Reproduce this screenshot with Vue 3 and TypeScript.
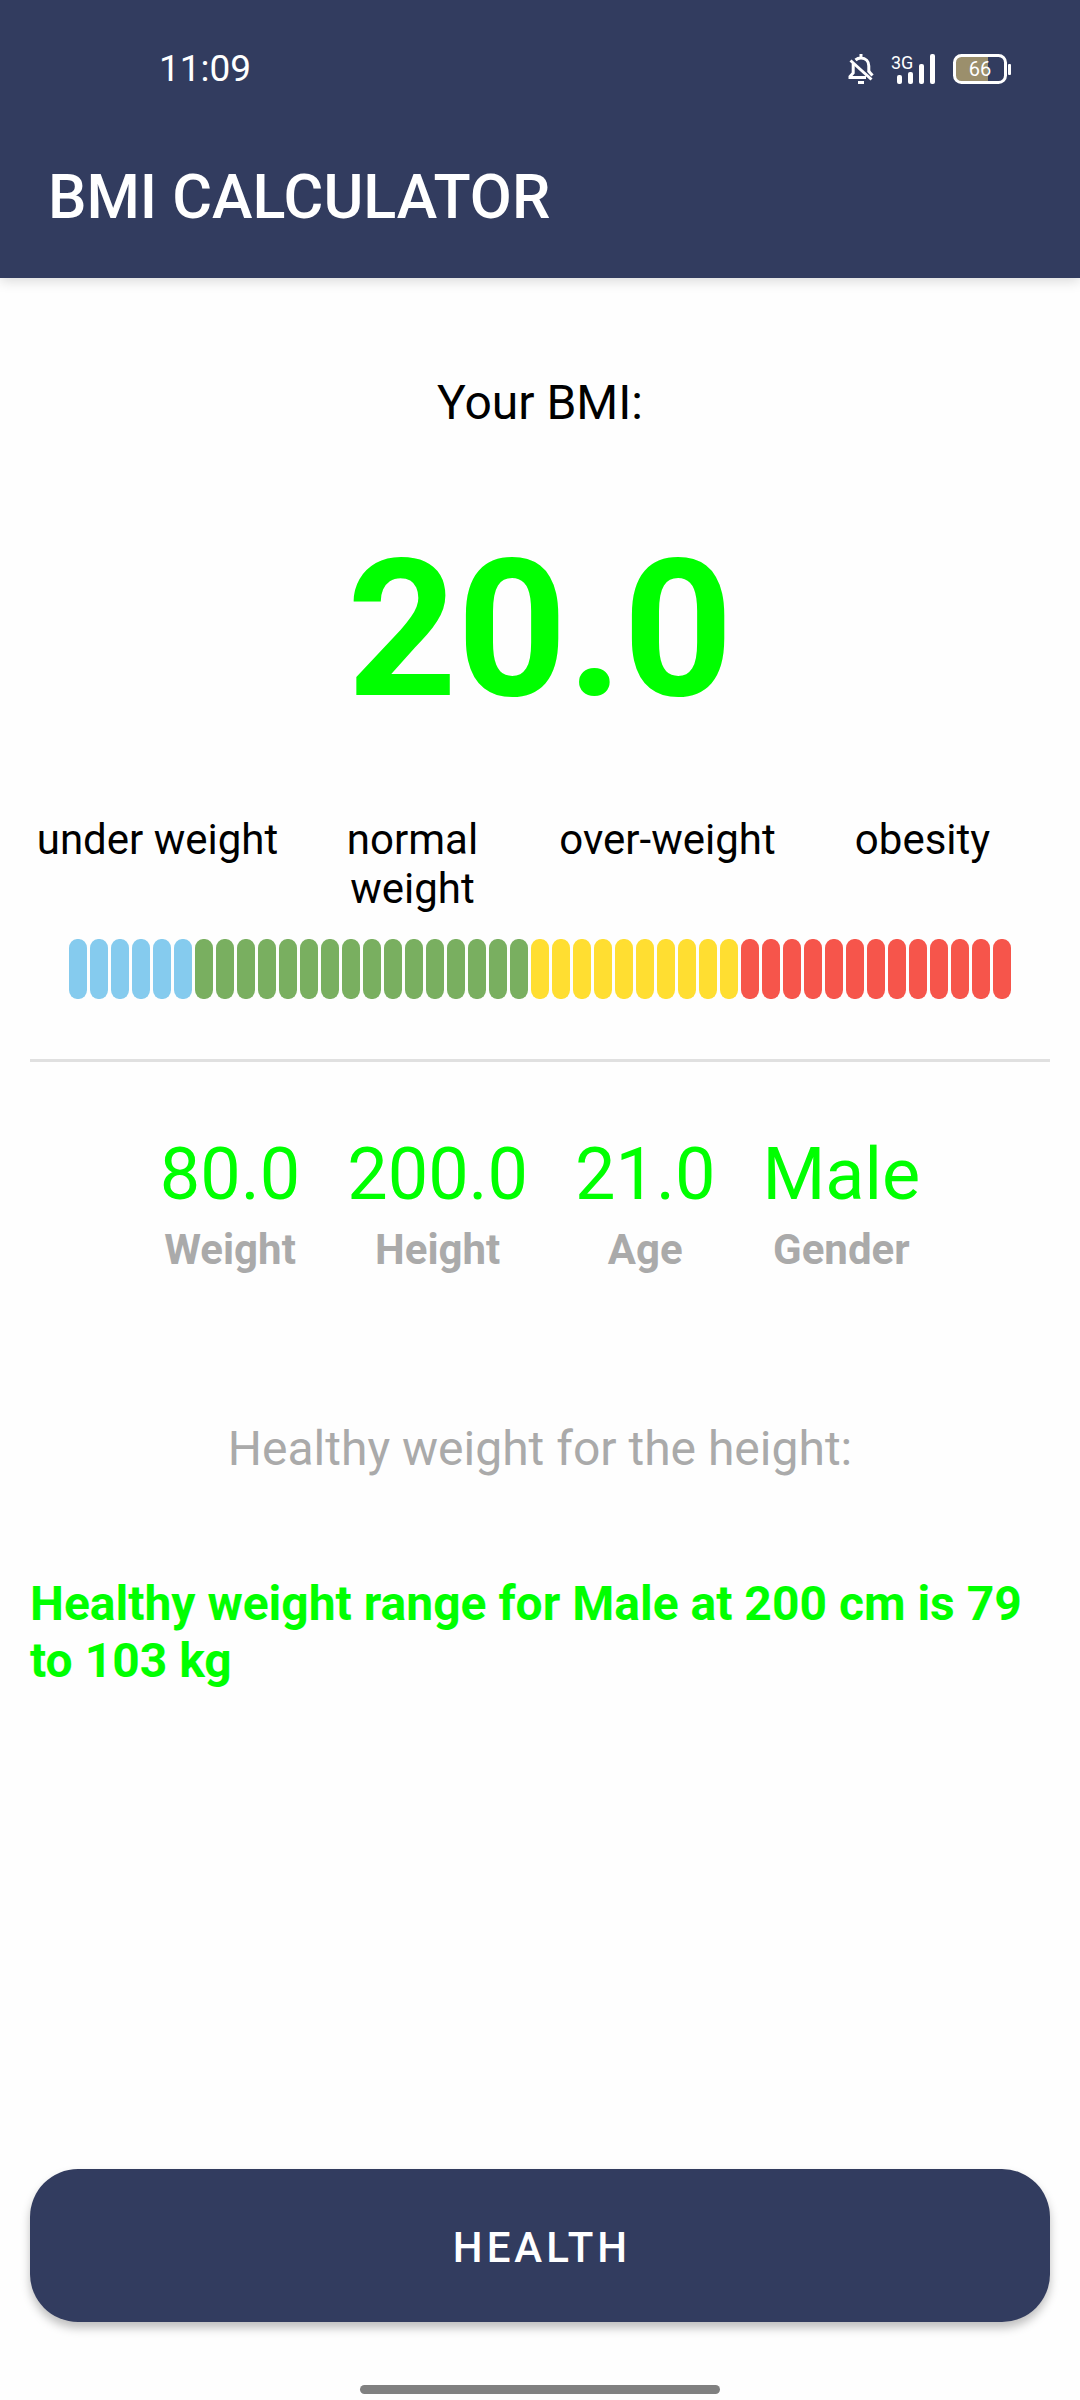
<script setup lang="ts">
interface Category {
  name: string
  color: string
  count: number
}

interface Stat {
  label: string
  value: string
}

const bmi = '20.0'

const categories: Category[] = [
  { name: 'under weight', color: '#85cbee', count: 6 },
  { name: 'normal weight', color: '#79af60', count: 16 },
  { name: 'over-weight', color: '#ffde31', count: 10 },
  { name: 'obesity', color: '#f6554b', count: 13 },
]

const segments: string[] = categories.flatMap((c) => Array<string>(c.count).fill(c.color))

const stats: Stat[] = [
  { label: 'Weight', value: '80.0' },
  { label: 'Height', value: '200.0' },
  { label: 'Age', value: '21.0' },
  { label: 'Gender', value: 'Male' },
]
</script>

<template>
  <div class="page">
    <header class="app-bar">
      <div class="status">
        <time class="clock">11:09</time>
        <div class="indicators">
          <svg class="bell" width="26" height="30" viewBox="0 0 26 30" fill="none" stroke="#fff" stroke-width="3" aria-label="Muted">
            <path d="M13 0v4M7.500 6C9 4.700 10.900 4 13 4c4.700 0 7.800 3.400 7.800 8v6" />
            <path d="M5.200 9.500v9.500L2 22.500V23.500h16" />
            <path d="M2.500 6.500L23.500 25.500" />
            <path d="M20.500 17l4 4.500" />
            <path d="M10 28.500h6" />
          </svg>
          <svg class="signal" width="44" height="38" viewBox="0 -8 44 38" fill="#fff" aria-label="3G signal">
            <text x="0" y="15" font-size="18">3G</text>
            <rect x="6" y="21" width="5" height="9" rx="2" />
            <rect x="17" y="18" width="5" height="12" rx="2" />
            <rect x="28" y="10" width="5" height="20" rx="2" />
            <rect x="39" y="0" width="5" height="30" rx="2" />
          </svg>
          <svg class="battery" width="58" height="30" viewBox="0 0 58 30" fill="#fff" aria-label="Battery 66">
            <path d="M9 2h26v26H9a7 7 0 0 1-7-7V9a7 7 0 0 1 7-7z" fill="#9b8f6c" />
            <rect x="1.500" y="1.500" width="51" height="27" rx="7" fill="none" stroke="#fff" stroke-width="3" />
            <rect x="55" y="10" width="3" height="11" rx="1" />
            <text x="27" y="22" font-size="20" text-anchor="middle">66</text>
          </svg>
        </div>
      </div>
      <h1 class="title">BMI CALCULATOR</h1>
    </header>

    <main class="content">
      <p class="caption">Your BMI:</p>
      <output class="bmi">{{ bmi }}</output>

      <ul class="categories">
        <li v-for="c in categories" :key="c.name">{{ c.name }}</li>
      </ul>
      <div class="scale" role="img" aria-label="BMI scale">
        <span v-for="(color, i) in segments" :key="i" class="segment" :style="{ backgroundColor: color }"></span>
      </div>

      <hr class="divider" />

      <dl class="stats">
        <div v-for="s in stats" :key="s.label" class="stat">
          <dt>{{ s.label }}</dt>
          <dd>{{ s.value }}</dd>
        </div>
      </dl>

      <p class="caption muted">Healthy weight for the height:</p>
      <p class="range">Healthy weight range for Male at 200 cm is 79 to 103 kg</p>

      <button type="button" class="health">HEALTH</button>
    </main>

    <div class="gesture"></div>
  </div>
</template>

<style>
body {
  margin: 0;
  background: #fefefe;
}
</style>

<style scoped>
.page {
  display: flex;
  flex-direction: column;
  min-height: 100vh;
  box-sizing: border-box;
  padding-bottom: 6px;
  font-family: Roboto, "Liberation Sans", sans-serif;
  color: #000;
}

.app-bar {
  padding: 54px 48px 46px;
  background: #323c5f;
  color: #fff;
  box-shadow: 0 3px 12px rgba(0, 0, 0, 0.15);
}

.status {
  display: flex;
  justify-content: space-between;
  align-items: center;
  height: 30px;
  padding: 0 21px 0 111px;
}

.clock {
  font-size: 37px;
  line-height: 30px;
}

.indicators {
  display: flex;
  align-items: flex-end;
  height: 30px;
}

.signal {
  margin: 0 18px 0 17px;
}

.title {
  margin: 78px 0 0;
  font-size: 61px;
  font-weight: 500;
  line-height: 70px;
}

.content {
  display: flex;
  flex: 1;
  flex-direction: column;
  padding: 97px 30px 0;
}

.caption {
  margin: 0;
  font-size: 48px;
  line-height: 56px;
  text-align: center;
}

.bmi {
  margin-top: 86px;
  font-size: 192px;
  font-weight: 700;
  line-height: 225px;
  text-align: center;
  color: #0f0;
}

.categories {
  display: grid;
  grid-template-columns: repeat(4, 1fr);
  margin: 73px 0 0;
  padding: 0;
  list-style: none;
  font-size: 42px;
  line-height: 49px;
  text-align: center;
}

.categories li {
  padding: 0 4px;
}

.scale {
  display: flex;
  gap: 3px;
  height: 60px;
  margin: 26px 39px 0;
}

.segment {
  flex: 1;
  border-radius: 8px / 9px;
}

.divider {
  width: 100%;
  height: 3px;
  margin: 60px 0 0;
  border: 0;
  background: #e0e0e0;
}

.stats {
  display: flex;
  justify-content: center;
  gap: 47px;
  margin: 71px 0 0;
}

.stat {
  display: flex;
  flex-direction: column-reverse;
  gap: 8px;
  text-align: center;
}

.stat dt {
  font-size: 42px;
  font-weight: 700;
  line-height: 49px;
  color: #aaa;
}

.stat dd {
  margin: 0;
  font-size: 72px;
  line-height: 84px;
  color: #0f0;
}

.muted {
  margin-top: 147px;
  color: #aaa;
}

.range {
  margin: 98px 0 0;
  font-size: 48px;
  font-weight: 700;
  line-height: 57px;
  color: #0f0;
}

.health {
  height: 153px;
  margin-top: auto;
  padding: 3px 0 0 4px;
  border: 0;
  border-radius: 48px;
  background: #323c5f;
  box-shadow: 0 6px 10px rgba(0, 0, 0, 0.25);
  color: #fff;
  font-family: inherit;
  font-size: 42px;
  font-weight: 500;
  letter-spacing: 4px;
}

.gesture {
  width: 33.3333%;
  height: 9px;
  margin: 63px auto 0;
  border-radius: 5px;
  background: #808080;
}
</style>
